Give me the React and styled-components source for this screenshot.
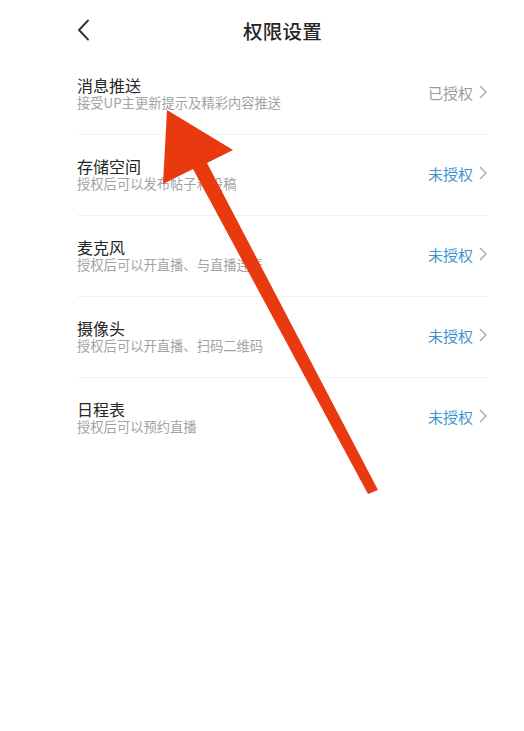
import React from "react";
import styled, { createGlobalStyle } from "styled-components";

const GlobalStyle = createGlobalStyle`
  html, body {
    margin: 0;
    padding: 0;
    background: #ffffff;
  }
  body {
    font-family: "Noto Sans CJK SC", "Noto Sans", sans-serif;
  }
`;

const Page = styled.div`
  position: relative;
  width: 524px;
  height: 731px;
  box-sizing: border-box;
  padding: 0 36px 0 77px;
  background: #fff;
  overflow: hidden;
`;

const Header = styled.header`
  height: 60px;
  display: flex;
  align-items: center;
  justify-content: center;
  position: relative;
  margin-bottom: -6px;
`;

const BackButton = styled.div`
  position: absolute;
  left: 0;
  top: 19px;
  width: 16px;
  height: 22px;
  display: flex;
  align-items: center;
`;

const Title = styled.h1`
  margin: 0;
  font-size: 19.5px;
  font-weight: 500;
  color: #262626;
  letter-spacing: 0.2px;
`;

const List = styled.ul`
  list-style: none;
  margin: 0;
  padding: 0;
`;

const Row = styled.li`
  height: 80px;
  display: flex;
  align-items: center;
  justify-content: space-between;
  border-bottom: 1px solid ${p => (p.last ? "transparent" : "#f1f1f1")};
`;

const TextBlock = styled.div`
  display: flex;
  flex-direction: column;
  margin-top: -1px;
`;

const ItemTitle = styled.div`
  font-size: 16px;
  line-height: 19px;
  color: #262626;
  font-weight: 400;
`;

const ItemDesc = styled.div`
  font-size: 13.3px;
  line-height: 16px;
  color: #a3a3a3;
`;

const Status = styled.div`
  display: flex;
  align-items: center;
  gap: 6px;
  font-size: 15px;
  color: ${p => (p.granted ? "#9b9b9b" : "#3d95cf")};
  margin-top: -4px;
`;

const ArrowLayer = styled.svg`
  position: absolute;
  left: 0;
  top: 0;
  pointer-events: none;
`;

const Chevron = ({ color, w = 9, h = 14, sw = 1.4 }) => (
  <svg width={w} height={h} viewBox={`0 0 ${w} ${h}`}>
    <path
      d={`M1.5 1.5 L${w - 2} ${h / 2} L1.5 ${h - 1.5}`}
      fill="none"
      stroke={color}
      strokeWidth={sw}
      strokeLinecap="round"
      strokeLinejoin="round"
    />
  </svg>
);

const items = [
  { title: "消息推送", desc: "接受UP主更新提示及精彩内容推送", granted: true },
  { title: "存储空间", desc: "授权后可以发布帖子和投稿", granted: false },
  { title: "麦克风", desc: "授权后可以开直播、与直播连麦", granted: false },
  { title: "摄像头", desc: "授权后可以开直播、扫码二维码", granted: false },
  { title: "日程表", desc: "授权后可以预约直播", granted: false },
];

export default function App() {
  return (
    <>
      <GlobalStyle />
      <Page>
        <Header>
          <BackButton>
            <svg width="14" height="22" viewBox="0 0 14 22">
              <path
                d="M11 1.5 L2 11 L11 20.5"
                fill="none"
                stroke="#333"
                strokeWidth="1.9"
                strokeLinecap="round"
                strokeLinejoin="round"
              />
            </svg>
          </BackButton>
          <Title>权限设置</Title>
        </Header>
        <List>
          {items.map((it, i) => (
            <Row key={it.title} last={i === items.length - 1}>
              <TextBlock>
                <ItemTitle>{it.title}</ItemTitle>
                <ItemDesc>{it.desc}</ItemDesc>
              </TextBlock>
              <Status granted={it.granted}>
                {it.granted ? "已授权" : "未授权"}
                <Chevron color="#a8a8a8" />
              </Status>
            </Row>
          ))}
        </List>
        <ArrowLayer width="524" height="731" viewBox="0 0 524 731">
          <polygon
            points="167,110 233,150 207,163 378,490 368,494 193,169 163,184"
            fill="#e9390f"
          />
        </ArrowLayer>
      </Page>
    </>
  );
}
